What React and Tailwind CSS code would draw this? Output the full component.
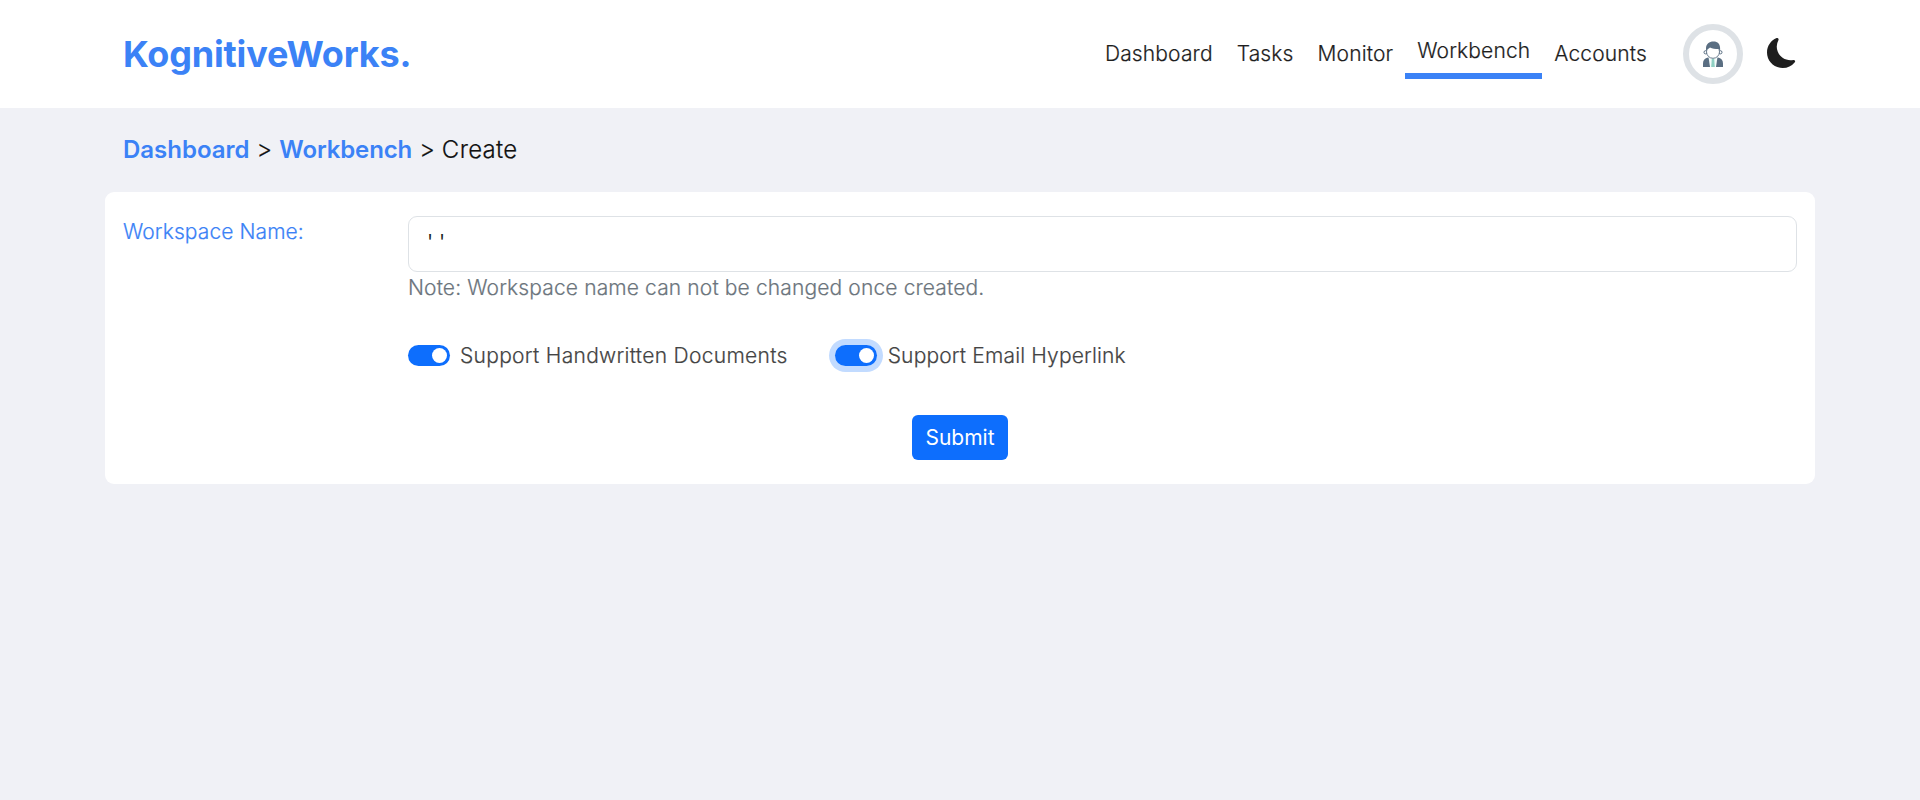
import React from "react";

function Toggle({ focused }) {
  return (
    <span
      className={
        "flex h-[21px] w-[42px] shrink-0 items-center justify-end rounded-full bg-[#0d6efd] pr-[3px] " +
        (focused ? "ring-6 ring-[#c2dbff]" : "")
      }
    >
      <span className="size-[15px] rounded-full bg-white" />
    </span>
  );
}

function UserIcon() {
  return (
    <svg viewBox="0 0 22 27" className="h-[27px] w-[22px]">
      <path d="M1 26v-3.500c0-3.400 1.800-5.200 5-5.900h10c3.200 .7 5 2.500 5 5.900V26z" fill="#5a6e82" />
      <path d="M6.500 16h9L14 26H8z" fill="#f4fbfa" />
      <path d="M9.800 17.800h2.400l.6 8.200H9.200z" fill="#8fd0c3" />
      <circle cx="3.600" cy="11.300" r="1.600" fill="#fff" stroke="#5a6e82" strokeWidth="1" />
      <circle cx="18.400" cy="11.300" r="1.600" fill="#fff" stroke="#5a6e82" strokeWidth="1" />
      <circle cx="11" cy="10.800" r="6.500" fill="#fff" stroke="#5a6e82" strokeWidth="0.900" />
      <path d="M4 9.800V7C4.300 3 7 .5 11.500 .5c4.300 0 6.600 2.700 6.600 6.500v2.800c-.5-.9-.9-1.400-1.500-1.700-3.500 0-6.300-.4-8.600-1.600C7 7.500 5 8.400 4 9.800z" fill="#5a6e82" />
    </svg>
  );
}

function MoonIcon() {
  return (
    <svg viewBox="0 0 16 16" className="size-[30px]" fill="#1e1e1e">
      <path d="M6 .278a.77.77 0 0 1 .08.858 7.200 7.200 0 0 0-.878 3.460c0 4.021 3.278 7.277 7.318 7.277q.792-.001 1.533-.160a.79.79 0 0 1 .81.316.73.73 0 0 1-.031.893A8.350 8.350 0 0 1 8.344 16C3.734 16 0 12.286 0 7.710 0 4.266 2.114 1.312 5.124.06A.75.75 0 0 1 6 .278" />
    </svg>
  );
}

export default function App() {
  return (
    <div className="min-h-screen bg-[#f0f1f6] font-['Inter',sans-serif] text-[21px] leading-[31.500px] font-light text-[#111] [-webkit-text-stroke-width:0.2px]">
      <header className="flex h-[108px] items-center bg-white px-[123px]">
        <h1 className="pt-0.5 text-[36px] font-bold tracking-[-0.17px] text-[#3b82f6] [-webkit-text-stroke-width:0]">KognitiveWorks.</h1>
        <nav className="ml-auto flex items-center tracking-[0.14px] text-[#1e1e1e]">
          <a className="px-3">Dashboard</a>
          <a className="px-3">Tasks</a>
          <a className="px-3">Monitor</a>
          <a className="border-b-6 border-[#3b82f6] px-3 pt-[5.500px] pb-[7px]">Workbench</a>
          <a className="px-3">Accounts</a>
        </nav>
        <div className="ml-6 flex size-[60px] items-center justify-center rounded-full border-6 border-[#dee2e6]">
          <UserIcon />
        </div>
        <button className="mb-0.5 ml-6">
          <MoonIcon />
        </button>
      </header>
      <main className="px-[105px]">
        <div className="flex h-[84px] items-center gap-[7px] pl-[18px] text-[24px]">
          <a className="font-semibold text-[#3b82f6] [-webkit-text-stroke-width:0]">Dashboard</a>
          <span>&gt;</span>
          <a className="font-semibold tracking-[-0.12px] text-[#3b82f6] [-webkit-text-stroke-width:0]">Workbench</a>
          <span>&gt;</span>
          <span className="tracking-[0.3px]">Create</span>
        </div>
        <section className="h-[292px] rounded-[9px] bg-white px-[18px] pt-6">
          <div className="flex">
            <label className="w-[285px] shrink-0 tracking-[0.09px] text-[#3b82f6]">Workspace Name:</label>
            <div className="flex-1">
              <div className="h-14 rounded-[9px] border border-[#dee2e6] px-[18px] py-[10px]">' '</div>
              <p className="tracking-[0.13px] text-[#6c757d]">Note: Workspace name can not be changed once created.</p>
              <div className="mt-9 flex items-center text-[#444]">
                <Toggle />
                <span className="ml-[10px] tracking-[0.3px]">Support Handwritten Documents</span>
                <span className="ml-[47px] flex items-center gap-[11px] tracking-[0.15px]">
                  <Toggle focused />
                  Support Email Hyperlink
                </span>
              </div>
            </div>
          </div>
          <div className="mt-11 flex justify-center">
            <button className="h-[45px] w-24 rounded-[6px] bg-[#0d6efd] font-normal text-white [-webkit-text-stroke-width:0]">Submit</button>
          </div>
        </section>
      </main>
    </div>
  );
}
